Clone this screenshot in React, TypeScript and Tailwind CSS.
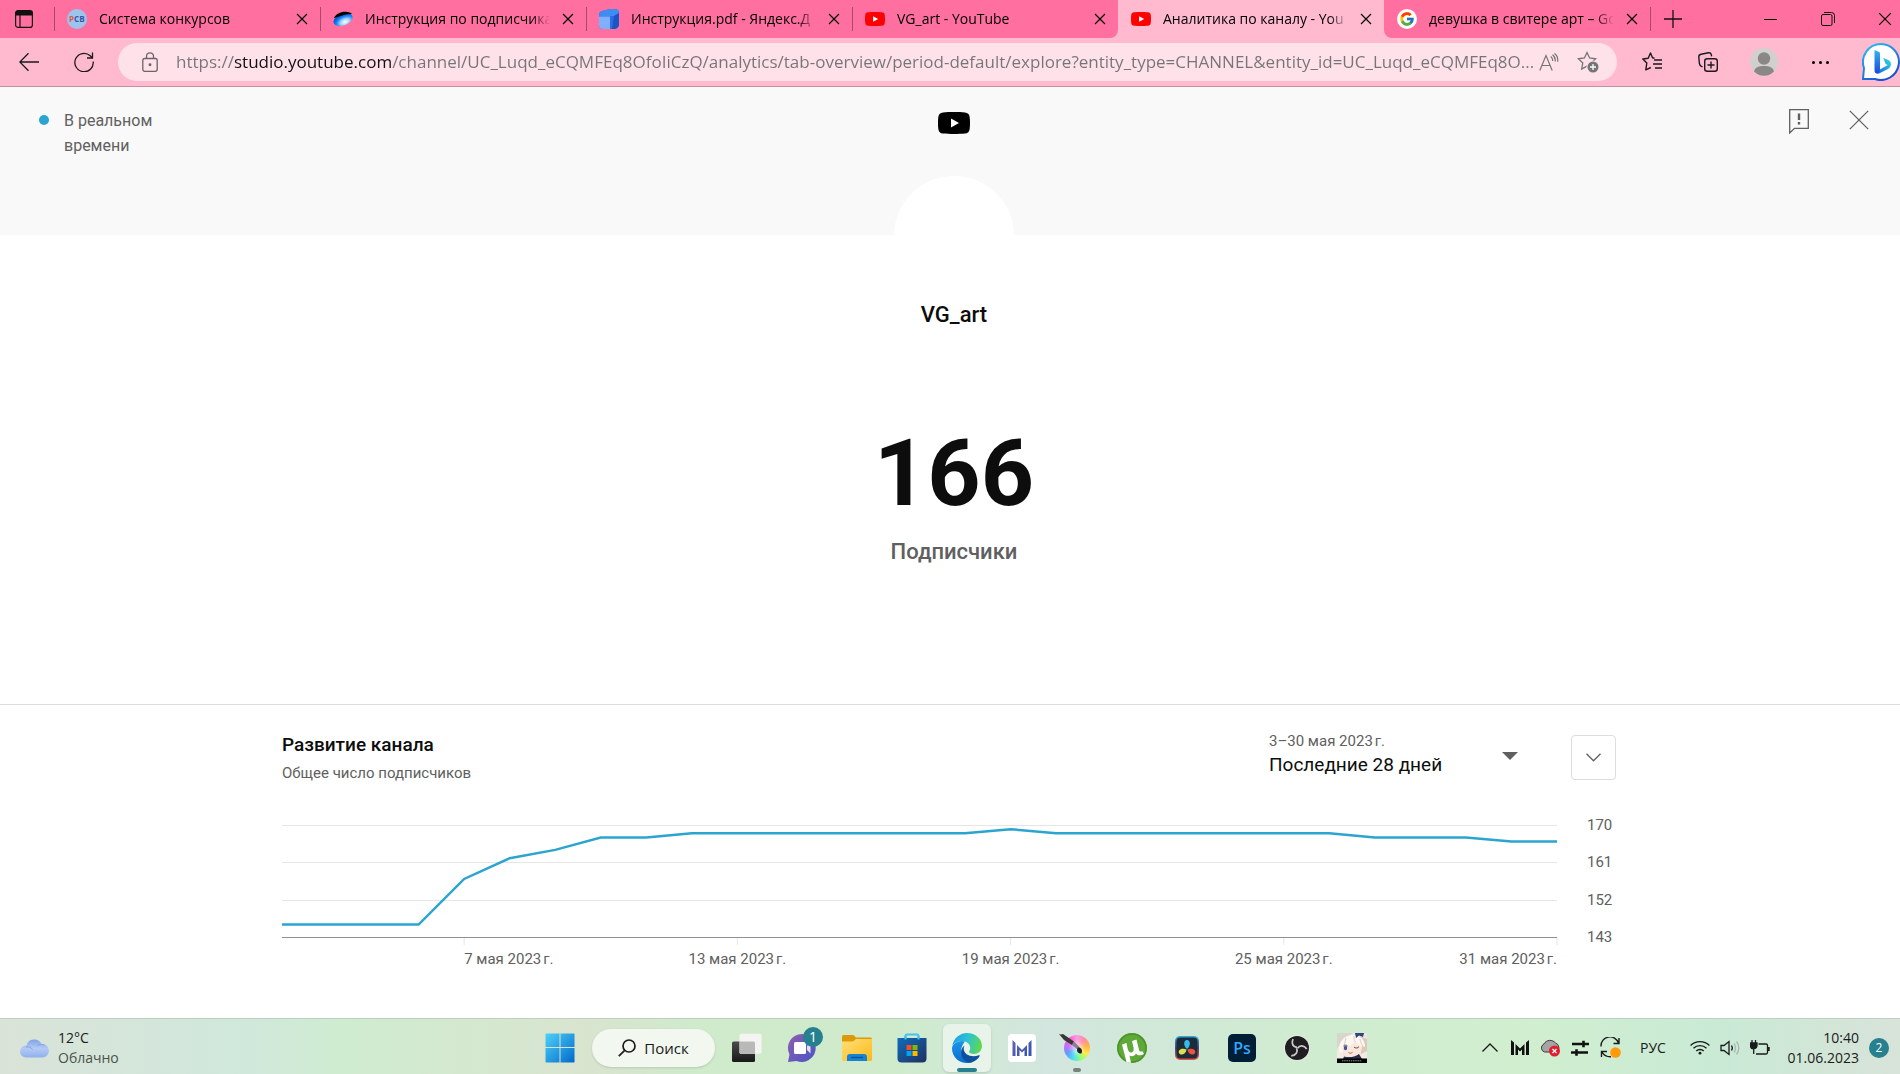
import React from "react";
import { FcGoogle } from "react-icons/fc";

const UI = "font-['Open_Sans','Noto_Sans',sans-serif]";

/* ---------- shared glyphs ---------- */

function Cross({ className, width = 1 }: { className: string; width?: number }) {
  return (
    <svg viewBox="0 0 12 12" className={className} fill="none" stroke="currentColor" strokeWidth={width} aria-hidden="true">
      <path d="M1 1 11 11M11 1 1 11" />
    </svg>
  );
}

function YouTubeMark({ className, fill }: { className: string; fill: string }) {
  return (
    <svg viewBox="0 0 32 22" className={className} preserveAspectRatio="none" aria-hidden="true">
      <path
        fill={fill}
        d="M5 .4C8 .1 12 0 16 0s8 .1 11 .4c2.700.2 4.300 1.600 4.600 4.300.3 2 .4 4 .4 6.300s-.1 4.300-.4 6.300c-.3 2.700-1.900 4.100-4.600 4.300-3 .3-7 .4-11 .4s-8-.1-11-.4C2.300 21.400.7 20 .4 17.300 0 15.300 0 13.300 0 11s0-4.300.4-6.300C.7 2 2.300.6 5 .4Z"
      />
      <path fill="#fff" d="M13 6.500v9l8-4.500z" />
    </svg>
  );
}

/* ---------- tab strip ---------- */

function FavPcb() {
  return (
    <svg viewBox="0 0 20 20" className="size-5" aria-hidden="true">
      <circle cx="10" cy="10" r="10" fill="#9cc4ec" />
      <text x="2" y="13" fontSize="8" fontWeight="700" fontFamily="Open Sans, sans-serif" fill="#e0584a">
        P<tspan fill="#3a55a5">CB</tspan>
      </text>
    </svg>
  );
}

function FavDisk() {
  return (
    <svg viewBox="0 0 20 20" className="size-5" aria-hidden="true">
      <defs>
        <radialGradient id="disk" cx=".55" cy=".75" r=".6">
          <stop offset="0" stopColor="#fff" />
          <stop offset=".4" stopColor="#9fd3ff" />
          <stop offset=".75" stopColor="#1b84f5" />
          <stop offset="1" stopColor="#0a5fd8" />
        </radialGradient>
      </defs>
      <ellipse cx="10" cy="10.500" rx="10" ry="6" fill="url(#disk)" transform="rotate(-22 10 10.500)" />
      <path d="M1 9C3 4.500 9 2 14.500 3c2 .3 3.500.9 4.500 2-3-.2-6 .3-9 1.300C6.500 7.300 4 8.500 1 9Z" fill="#000" />
    </svg>
  );
}

function FavCube() {
  return (
    <svg viewBox="0 0 20 20" className="size-5" aria-hidden="true">
      <path d="M0 6a4 4 0 0 1 3-4l8-2h5a4 4 0 0 1 4 4v11a5 5 0 0 1-4 5H4a4 4 0 0 1-4-4z" fill="#2a6fe6" />
      <path d="M3 2 11 0h5a4 4 0 0 1 4 4l-5 3L0 7a5 5 0 0 1 3-5z" fill="#3f8cf2" />
      <path d="M0 7.500h11V20H4a4 4 0 0 1-4-4z" fill="#7fb0ff" />
      <path d="M15 7 20 4v11a5 5 0 0 1-4 5h-3z" fill="#1a55c8" />
    </svg>
  );
}

function FavGoogle() {
  return (
    <span className="flex size-5 items-center justify-center rounded-full bg-white">
      <FcGoogle className="size-4" />
    </span>
  );
}

const FavYouTube = () => <YouTubeMark className="h-3.5 w-5" fill="#ff0000" />;

const tabs = [
  { title: "Система конкурсов", Icon: FavPcb },
  { title: "Инструкция по подписчика", Icon: FavDisk },
  { title: "Инструкция.pdf - Яндекс.Д", Icon: FavCube },
  { title: "VG_art - YouTube", Icon: FavYouTube },
  { title: "Аналитика по каналу - You", Icon: FavYouTube, active: true },
  { title: "девушка в свитере арт – Go", Icon: FavGoogle },
];

function TabStrip() {
  return (
    <div className="flex h-[38px] items-stretch bg-[#ffbad0] text-black">
      <button aria-label="Меню вкладок" className="flex w-[54px] shrink-0 items-center bg-[#ff6f9f] pl-[15px]">
        <svg viewBox="0 0 18 18" className="size-[18px]" fill="none" stroke="#111" strokeWidth="1.200" aria-hidden="true">
          <rect x=".6" y=".6" width="16.800" height="16.800" rx="2.500" />
          <path d="M5 4v13" />
          <path d="M1 3a2 2 0 0 1 2-2h12a2 2 0 0 1 2 2v2H1z" fill="#111" />
        </svg>
      </button>
      {tabs.map(({ title, Icon, active }, i) => (
        <div
          key={title}
          className={
            active
              ? "flex w-[266px] min-w-0 items-center bg-[#ffbad0] pl-px"
              : "flex w-[266px] min-w-0 items-center bg-[#ff6f9f]" + (i === 3 ? " rounded-br-lg" : i === 5 ? " rounded-bl-lg" : "")
          }
        >
          {!active && <span className={i === 5 ? "h-6 w-px" : "h-6 w-px bg-[#a24c6a]"} />}
          <a href="#tab" aria-current={active ? "page" : undefined} className="flex min-w-0 flex-1 items-center gap-3 pl-3">
            <span className="flex w-5 shrink-0 justify-center">
              <Icon />
            </span>
            <span className="flex-1 overflow-hidden mask-r-from-90% text-sm leading-5 whitespace-nowrap">{title}</span>
          </a>
          <button aria-label={"Закрыть " + title} className="flex w-9 shrink-0 items-center justify-center">
            <Cross className="size-3" width={1.2} />
          </button>
        </div>
      ))}
      <div className="flex min-w-[250px] flex-1 items-center bg-[#ff6f9f]">
        <span className="h-6 w-px bg-[#a24c6a]" />
        <button aria-label="Новая вкладка" className="flex h-full w-11 items-center justify-center">
          <svg viewBox="0 0 18 18" className="size-[18px]" stroke="#111" strokeWidth="1.300" aria-hidden="true">
            <path d="M9 0v18M0 9h18" />
          </svg>
        </button>
        <span className="flex-1" />
        <button aria-label="Свернуть" className="flex h-full w-[57px] items-center justify-center">
          <span className="h-px w-[13px] bg-black" />
        </button>
        <button aria-label="Свернуть в окно" className="flex h-full w-[57px] items-center justify-center">
          <svg viewBox="0 0 14 14" className="size-3.5" fill="none" stroke="#111" aria-hidden="true">
            <rect x=".5" y="2.500" width="10.500" height="11" rx="1.500" />
            <path d="M3 .5h7.500a3 3 0 0 1 3 3V11" />
          </svg>
        </button>
        <button aria-label="Закрыть окно" className="flex h-full w-11 items-center justify-end pr-2">
          <Cross className="size-3.5" />
        </button>
      </div>
    </div>
  );
}

/* ---------- toolbar ---------- */

const STAR = "M10 1.500 12.600 7l6 .8-4.400 4.200 1.100 6-5.300-2.900L4.700 18l1.100-6L1.400 7.800l6-.8z";

function Toolbar() {
  return (
    <div className="flex h-[49px] items-center border-b border-[#c48fa1] bg-[#ffbad0] text-[#1a1a1a]">
      <button aria-label="Назад" className="flex w-[58px] items-center justify-center">
        <svg viewBox="0 0 20 20" className="size-5" fill="none" stroke="currentColor" strokeWidth="1.300" aria-hidden="true">
          <path d="M20 10H.8M9.500 1.200.8 10l8.700 8.800" />
        </svg>
      </button>
      <button aria-label="Обновить" className="flex w-[52px] items-center justify-center">
        <svg viewBox="0 0 20 20" className="size-5" fill="none" stroke="currentColor" strokeWidth="1.300" aria-hidden="true">
          <path d="M19.200 9.500a9.200 9.200 0 1 1-3-5.800L18.500 6M18.500.5V6H13" />
        </svg>
      </button>
      <div className="ml-2 flex h-[38px] flex-1 items-center rounded-full bg-[#ffe1ea] pr-4 pl-6 text-[#757575]">
        <svg viewBox="0 0 16 20" className="h-5 w-4 shrink-0" fill="none" stroke="#6b6468" strokeWidth="1.300" aria-hidden="true">
          <rect x=".8" y="6.500" width="14.400" height="12.800" rx="2" />
          <path d="M4.500 6.500V4.300a3.500 3.500 0 0 1 7 0v2.200" />
          <circle cx="8" cy="12.800" r=".8" fill="#6b6468" />
        </svg>
        <input
          aria-label="Адресная строка"
          readOnly
          className="ml-[18px] h-7 min-w-0 flex-1 bg-[linear-gradient(90deg,#757575_58px,#111_58px,#111_215px,#757575_215px)] bg-clip-text text-[17px] leading-7 text-ellipsis text-transparent outline-none"
          value="https://studio.youtube.com/channel/UC_Luqd_eCQMFEq8OfoIiCzQ/analytics/tab-overview/period-default/explore?entity_type=CHANNEL&entity_id=UC_Luqd_eCQMFEq8O..."
        />
        <button aria-label="Прочесть вслух" className="flex w-6 shrink-0 justify-center">
          <svg viewBox="0 0 20 18" className="h-[18px] w-5" fill="none" stroke="#757575" strokeWidth="1.200" aria-hidden="true">
            <path d="M.8 17.500 7 2.500l6.200 15M3 12.500h8M11.800 3.500c1.500 1.200 2 2.700 1.800 4.500M13.500 1.800c2.200 1.600 3 4 2.700 6.700M15.500.4c2.700 2 3.600 5 3.200 8.300" />
          </svg>
        </button>
        <button aria-label="Добавить в избранное" className="ml-3.5 flex w-[26px] shrink-0 justify-center">
          <svg viewBox="0 0 22 22" className="size-[22px]" fill="none" stroke="#757575" strokeWidth="1.300" aria-hidden="true">
            <path d={STAR} />
            <circle cx="16" cy="16" r="6.500" fill="#ffe1ea" stroke="none" />
            <circle cx="16" cy="16" r="5.500" fill="#757575" stroke="none" />
            <path d="M16 13v6M13 16h6" stroke="#fff" />
          </svg>
        </button>
      </div>
      <div className="flex shrink-0 items-center pl-[7px]">
        <button aria-label="Избранное" className="flex w-14 justify-center">
          <svg viewBox="0 0 20 20" className="size-5" fill="none" stroke="currentColor" strokeWidth="1.400" strokeLinejoin="round" aria-hidden="true">
            <path d="M12.500 6.200 10.500 5.800 8.500 1 6.200 6.200.8 7l4 4-1 6.800 5-2.300M12 8h8M11 12h9M13 16h7" />
          </svg>
        </button>
        <button aria-label="Коллекции" className="flex w-14 justify-center">
          <svg viewBox="0 0 20 20" className="size-5" fill="none" stroke="currentColor" strokeWidth="1.400" strokeLinejoin="round" aria-hidden="true">
            <rect x="6.700" y="6.700" width="12.600" height="12.600" rx="2.500" />
            <path d="M13 9.500v7M9.500 13h7M4.500 15 3 14.200C2 13.500 1.700 12.500 1.400 11.500L.8 5C.7 3.500 1.500 2.500 3 2.200L10.500.8C12 .6 13 1.300 13.300 2.700l.3 1.700" />
          </svg>
        </button>
        <button aria-label="Профиль" className="flex w-14 justify-center">
          <svg viewBox="0 0 28 28" className="size-7" aria-hidden="true">
            <circle cx="14" cy="14" r="14" fill="#d2d0ce" />
            <circle cx="14" cy="10.500" r="6.200" fill="#8a8886" />
            <path d="M4 23.500C5 19.500 8 18 14 18s9 1.500 10 5.500A14 14 0 0 1 4 23.500Z" fill="#8a8886" />
          </svg>
        </button>
        <button aria-label="Настройки и другое" className="flex w-14 justify-center gap-1">
          <span className="size-[3px] rounded-full bg-black" />
          <span className="size-[3px] rounded-full bg-black" />
          <span className="size-[3px] rounded-full bg-black" />
        </button>
        <button aria-label="Bing" className="ml-3.5">
          <svg viewBox="0 0 38 38" className="size-[38px]" aria-hidden="true">
            <defs>
              <linearGradient id="bing" x1="0" y1="0" x2=".6" y2="1">
                <stop offset="0" stopColor="#2cc3f0" />
                <stop offset="1" stopColor="#1a4fd0" />
              </linearGradient>
              <linearGradient id="bingb" x1="0" y1="0" x2="0" y2="1">
                <stop offset="0" stopColor="#30b4f5" />
                <stop offset="1" stopColor="#1b48d8" />
              </linearGradient>
              <linearGradient id="bings" x1="0" y1="1" x2="1" y2="0">
                <stop offset="0" stopColor="#1b5ee0" />
                <stop offset="1" stopColor="#2fe0e0" />
              </linearGradient>
            </defs>
            <path d="M19 1a18 18 0 1 1-6 35H1l1-11A18 18 0 0 1 19 1Z" fill="#fff" stroke="url(#bing)" strokeWidth="2" />
            <path d="M14.500 28.500c-1 1.200.3 2.500 2.500 2l9-4.500c2.500-1.500 3.500-4 2.700-6.500-.6-1.500-1.600-2.300-3-2.800l-4.500-1.600 2.500 5.900 2 1z" fill="url(#bings)" />
            <path d="M12.500 7 17 9c.6.300 1 .8 1 1.500V26c0 3-1.500 4.500-3 4.500s-2.500-1-2.500-3z" fill="url(#bingb)" />
          </svg>
        </button>
      </div>
    </div>
  );
}

/* ---------- page ---------- */

const subscribers = [
  146, 146, 146, 146, 157, 162, 164, 167, 167, 168, 168, 168, 168, 168, 168, 168, 169, 168, 168, 168, 168, 168, 168, 168, 167, 167,
  167, 166, 166,
];
const TOP = 10;
const BOTTOM = 122;
const WIDTH = 1275;
const yOf = (v: number) => BOTTOM - ((v - 143) * (BOTTOM - TOP)) / 27;
const xOf = (i: number) => (i * WIDTH) / 28;
const line = subscribers.map((v, i) => `${xOf(i)},${yOf(v)}`).join(" ");

function Chart() {
  return (
    <div className="mt-8 flex">
      <div className="min-w-0 flex-1">
        <svg viewBox="0 0 1275 132" preserveAspectRatio="none" className="block h-[132px] w-full overflow-visible" role="img" aria-label="Общее число подписчиков">
          <g fill="#e6e6e6">
            <rect y="10" width="1275" height="1" />
            <rect y="47" width="1275" height="1" />
            <rect y="85" width="1275" height="1" />
            {[4, 10, 16, 22, 28].map((i) => (
              <rect key={i} x={xOf(i) - 0.5} y="122" width="1" height="8" />
            ))}
          </g>
          <rect y="122" width="1275" height="1" fill="#909090" />
          <polyline points={line} fill="none" stroke="#2ba5cf" strokeWidth="2.500" vectorEffect="non-scaling-stroke" />
        </svg>
        <div className="grid grid-cols-[repeat(28,minmax(0,1fr))] pt-0.5 text-center text-[15px] leading-5 whitespace-nowrap text-[#606060]">
          <span className="col-[5/8] text-left">7 мая 2023{"\u202f"}г.</span>
          <span className="col-[8/14]">13 мая 2023{"\u202f"}г.</span>
          <span className="col-[14/20]">19 мая 2023{"\u202f"}г.</span>
          <span className="col-[20/26]">25 мая 2023{"\u202f"}г.</span>
          <span className="col-[26/29] text-right">31 мая 2023{"\u202f"}г.</span>
        </div>
      </div>
      <div className="flex h-[132px] w-[59px] flex-col justify-between pl-[30px] text-[15px] leading-5 text-[#606060]">
        <span>170</span>
        <span>161</span>
        <span>152</span>
        <span>143</span>
      </div>
    </div>
  );
}

function Page() {
  return (
    <main className="flex flex-1 flex-col bg-white font-[Roboto,sans-serif] text-[#0d0d0d]">
      <header className="grid h-[148px] grid-cols-[1fr_auto_1fr] items-start overflow-hidden bg-[#f9f9f9]">
        <div className="flex gap-[15px] pt-[21px] pl-[39px]">
          <span className="mt-[7px] size-2.5 shrink-0 rounded-full bg-[#2ba5cf]" />
          <p className="w-[110px] text-base leading-[25px] text-[#606060]">В реальном времени</p>
        </div>
        <div className="flex flex-col items-center gap-[42px] pt-[25px] pl-2">
          <YouTubeMark className="h-[22px] w-8" fill="#000" />
          <span className="size-[120px] rounded-full bg-white" />
        </div>
        <div className="flex items-start justify-end gap-[39px] pt-[22px] pr-[30px] text-[#606060]">
          <button aria-label="Отправить отзыв">
            <svg viewBox="0 0 20 25" className="h-[25px] w-5" fill="none" stroke="currentColor" strokeWidth="1.300" aria-hidden="true">
              <path d="M.7.700h18.600v18.600H5.500L.7 24z" />
              <path d="M10 4.500v6.500M10 13v2.500" strokeWidth="2.400" />
            </svg>
          </button>
          <button aria-label="Закрыть">
            <Cross className="size-[22px]" width={0.7} />
          </button>
        </div>
      </header>

      <section className="flex flex-col items-center border-b border-[#ddd] pb-[136px] pl-2">
        <h1 className="mt-16 text-[22px] leading-8 font-medium">VG_art</h1>
        <p className="mt-[95px] text-[93px] leading-[96px] font-bold">166</p>
        <p className="mt-[14px] text-[22px] leading-8 font-medium text-[#606060]">Подписчики</p>
      </section>

      <section className="mr-[284px] ml-[282px] pt-6">
        <div className="flex items-start">
          <div className="flex-1 pt-1">
            <h2 className="text-[19px] leading-6 font-medium">Развитие канала</h2>
            <p className="mt-1.5 text-[15px] leading-5 text-[#606060]">Общее число подписчиков</p>
          </div>
          <div className="relative mr-[45px] w-[257px]">
            <label htmlFor="period" className="block text-[15px] leading-6 text-[#606060]">
              3–30 мая 2023{"\u202f"}г.
            </label>
            <select id="period" className="block w-full appearance-none bg-transparent text-[19px] leading-6 outline-none">
              <option>Последние 28 дней</option>
            </select>
            <svg viewBox="0 0 16 8" className="pointer-events-none absolute top-[23px] right-2 h-2 w-4" aria-hidden="true">
              <path d="M0 0h16L8 8z" fill="#606060" />
            </svg>
          </div>
          <button aria-label="Скрыть график" className="mt-1.5 flex size-[45px] items-center justify-center rounded border border-[#ddd]">
            <svg viewBox="0 0 15 9" className="h-[9px] w-[15px]" fill="none" stroke="#606060" strokeWidth="1.300" aria-hidden="true">
              <path d="M.5.8 7.500 7.800l7-7" />
            </svg>
          </button>
        </div>
        <Chart />
      </section>
    </main>
  );
}

/* ---------- taskbar ---------- */

function StartIcon() {
  return (
    <svg viewBox="0 0 30 30" className="size-[30px]" aria-hidden="true">
      <defs>
        <linearGradient id="win" gradientUnits="userSpaceOnUse" x1="0" y1="0" x2="30" y2="30">
          <stop offset="0" stopColor="#4fd3fb" />
          <stop offset="1" stopColor="#0068c9" />
        </linearGradient>
      </defs>
      <path d="M1 .5h13.500V14H.5V1zM15.500.5H29l.5.5v13h-14zM.5 15h14v14.500H1L.5 29zM15.500 15h14v14l-.5.5H15.500z" fill="url(#win)" />
    </svg>
  );
}

function TaskViewIcon() {
  return (
    <svg viewBox="0 0 30 30" className="size-[30px]" aria-hidden="true">
      <defs>
        <linearGradient id="tvd" x1="0" y1="0" x2="0" y2="1">
          <stop offset="0" stopColor="#4a4a4a" />
          <stop offset="1" stopColor="#191919" />
        </linearGradient>
      </defs>
      <rect x="0" y="8.500" width="23" height="20.500" rx="1.500" fill="url(#tvd)" />
      <rect x="7.500" y=".8" width="22" height="20" rx="1.500" fill="#f4f5f2" />
      <path d="M7.500 8.500h14A1.500 1.500 0 0 1 23 10v10.800H9a1.500 1.500 0 0 1-1.500-1.500z" fill="#b9bab8" />
    </svg>
  );
}

function ChatIcon() {
  return (
    <span className="relative">
      <svg viewBox="0 0 30 30" className="size-[30px]" aria-hidden="true">
        <defs>
          <linearGradient id="chat" x1="0" y1="0" x2="1" y2="1">
            <stop offset="0" stopColor="#8f5db0" />
            <stop offset="1" stopColor="#4a55c5" />
          </linearGradient>
        </defs>
        <path d="M15 1a14 14 0 1 1-5.500 27L1 29l1.500-7.500A14 14 0 0 1 15 1Z" fill="url(#chat)" />
        <rect x="7" y="9" width="12" height="12" rx="1.500" fill="#fff" />
        <path d="m20 13 3.500-3.500v11L20 17z" fill="#dfe2fa" />
      </svg>
      <span className="absolute -top-1.5 -right-1.5 flex size-5 items-center justify-center rounded-full bg-[#26808f] text-sm leading-5 text-white">1</span>
    </span>
  );
}

function FolderIcon() {
  return (
    <svg viewBox="0 0 30 28" className="h-7 w-[30px]" aria-hidden="true">
      <defs>
        <linearGradient id="fold" x1="0" y1="0" x2="1" y2="1">
          <stop offset="0" stopColor="#ffe07a" />
          <stop offset="1" stopColor="#fbb917" />
        </linearGradient>
      </defs>
      <path d="M0 2.500A1.500 1.500 0 0 1 1.500 1h9c1 0 1.500.4 2 1l1.500 1.500h14.500A1.500 1.500 0 0 1 30 5v6H0z" fill="#dd9a08" />
      <path d="M0 7.500h11L14 5h16v20.500a1.500 1.500 0 0 1-1.500 1.500h-27A1.500 1.500 0 0 1 0 25.500z" fill="url(#fold)" />
      <path d="M5 27v-4a3 3 0 0 1 3-3h14a3 3 0 0 1 3 3v4z" fill="#1583d3" />
      <path d="M9 23.500h12" stroke="#0b4f93" strokeWidth="1.300" />
    </svg>
  );
}

function StoreIcon() {
  return (
    <svg viewBox="0 0 30 30" className="size-[30px]" aria-hidden="true">
      <defs>
        <linearGradient id="store" x1="0" y1="0" x2="1" y2="1">
          <stop offset="0" stopColor="#0f6cbd" />
          <stop offset="1" stopColor="#20305f" />
        </linearGradient>
      </defs>
      <path d="M8.500 8V3a1.500 1.500 0 0 1 1.500-1.500h10A1.500 1.500 0 0 1 21.500 3v5" fill="none" stroke="#41c4ee" strokeWidth="2" />
      <path d="M.5 5h29v20.500a4 4 0 0 1-4 4h-21a4 4 0 0 1-4-4z" fill="url(#store)" />
      <path d="M8.500 6.500V3M21.500 6.500V3" stroke="#41c4ee" strokeWidth="2" />
      <rect x="9.500" y="12" width="5" height="5" fill="#f25022" />
      <rect x="15.500" y="12" width="5" height="5" fill="#7fba00" />
      <rect x="9.500" y="18" width="5" height="5" fill="#00a4ef" />
      <rect x="15.500" y="18" width="5" height="5" fill="#ffb900" />
    </svg>
  );
}

function EdgeIcon() {
  return (
    <svg viewBox="0 0 30 30" className="size-[30px]" aria-hidden="true">
      <defs>
        <linearGradient id="edgeTop" x1="0" y1=".3" x2="1" y2=".5">
          <stop offset="0" stopColor="#1c9fe8" />
          <stop offset=".5" stopColor="#2bc3d2" />
          <stop offset="1" stopColor="#62d84a" />
        </linearGradient>
        <linearGradient id="edgeLeft" x1="0" y1="0" x2="0" y2="1">
          <stop offset="0" stopColor="#1c96e8" />
          <stop offset="1" stopColor="#0a6ed1" />
        </linearGradient>
      </defs>
      <path d="M.3 13C1.500 5.500 7.500 0 15 0c8.500 0 15 6 15 13 0 5-4 8-8 8-3 0-5-1-5-2.200 0-.8 1.300-1.500 1.300-4C18.300 11 14.500 8 10 8 5.500 8 1.500 10.500.3 13Z" fill="url(#edgeTop)" />
      <path d="M10 8C4 8 0 12 0 15.500 0 24 7 30 15 30c2 0 4-.4 5.500-1-6 .5-11.500-4.500-11.500-11 0-4 2-7 4-9.500C12.200 8.200 11 8 10 8Z" fill="url(#edgeLeft)" />
      <path d="M12.500 12.500C10 14.500 9 17 9 19.500 9 25.500 14 30 19 29.500c4-1 7-3.500 8.700-6.500.3-.7-.3-1-1-.7-1.500.7-3.200 1-5 1-5.500 0-10-3-10-7.500 0-1.200.3-2.300.8-3.300Z" fill="#0c509e" />
    </svg>
  );
}

function MIcon() {
  return (
    <svg viewBox="0 0 28 28" className="size-7" aria-hidden="true">
      <defs>
        <linearGradient id="mgr" x1="0" y1="0" x2="1" y2="1">
          <stop offset="0" stopColor="#6a5fb5" />
          <stop offset="1" stopColor="#2f55b0" />
        </linearGradient>
      </defs>
      <rect width="28" height="28" rx="4" fill="#fff" />
      <path d="M4.500 6 7.500 9v13h-3zM23.500 6l-3 3v13h3zM9 11l5 5 5-5v11h-2.500v-6L14 18.500 11.500 16v6H9z" fill="url(#mgr)" />
    </svg>
  );
}

function KritaIcon() {
  return (
    <span className="relative flex size-[26px] items-center justify-center rounded-full bg-[conic-gradient(from_0deg,#ff9be8,#ff8fa0,#ffb347,#ffe94a,#8dff7a,#4fe0f0,#5aa0ff,#c86bff,#ff5ad0,#ff9be8)]">
      <span className="size-3 rounded-full bg-white/60 blur-[2px]" />
      <svg viewBox="0 0 30 30" className="absolute -top-1 -left-1 size-[30px] overflow-visible" aria-hidden="true">
        <path d="M-1 3 1 3.500 3 3l11 7.500-2 3.500L4 9z" fill="#383838" />
        <path d="m14 10.500 5.500 5.500-2 2.500-5.500-4.500z" fill="#7d858e" />
        <path d="M18 16.500c3-.3 5 2.500 3.500 6-3 .3-5-1.500-4.300-4.500z" fill="#202020" />
      </svg>
    </span>
  );
}

function TorrentIcon() {
  return (
    <svg viewBox="0 0 30 30" className="size-[30px]" aria-hidden="true">
      <circle cx="15" cy="15" r="15" fill="#5fa83a" />
      <circle cx="15" cy="15" r="14" fill="none" stroke="#4c9428" strokeWidth="1.500" />
      <path d="M5 11.500 9.500 10c1 5 1.500 9.500 4.500 9.500 2.500 0 3-2.500 2.500-5L15 8l4.500-1.500L22 17c.5 1.500 1.500 2 3.500 1.200L27 21c-3 2-6.500 1.800-8-.5-1 2.300-4 3.500-6.500 2L14 30l-4.500-1z" fill="#fff" />
    </svg>
  );
}

function ResolveIcon() {
  return (
    <svg viewBox="0 0 24 24" className="size-6" aria-hidden="true">
      <defs>
        <linearGradient id="dv" x1="0" y1="0" x2="0" y2="1">
          <stop offset="0" stopColor="#2fb0d8" />
          <stop offset=".5" stopColor="#4a4a70" />
          <stop offset="1" stopColor="#e5543c" />
        </linearGradient>
      </defs>
      <rect width="24" height="24" rx="5" fill="url(#dv)" />
      <rect x="1.500" y="1.500" width="21" height="21" rx="4" fill="#1e2b3c" />
      <path d="M12 13c-4-3-3.500-9 0-9s4 6 0 9Z" fill="#33bde8" />
      <path d="M11.500 13.500c-.5 5-6 6.500-7.500 3.500s3-5.500 7.500-3.500Z" fill="#d9e24c" />
      <path d="M12.500 13.500c.5 5 6 6.500 7.500 3.500s-3-5.500-7.500-3.500Z" fill="#f0533c" />
    </svg>
  );
}

function PsIcon() {
  return <span className="flex size-7 items-center justify-center rounded-[5px] bg-[#001e36] text-base leading-none font-semibold text-[#31a8ff]">Ps</span>;
}

function ObsIcon() {
  return (
    <svg viewBox="0 0 26 26" className="size-[26px]" aria-hidden="true">
      <circle cx="13" cy="13" r="13" fill="#e8e8e8" />
      <circle cx="13" cy="13" r="12" fill="#1f1d20" />
      <g fill="none" stroke="#c8c8c8" strokeWidth="1.800">
        <path d="M13 12.500C9 12 7 8.500 9 4" />
        <path d="M13 12.500C9 12 7 8.500 9 4" transform="rotate(120 13 13)" />
        <path d="M13 12.500C9 12 7 8.500 9 4" transform="rotate(240 13 13)" />
      </g>
    </svg>
  );
}

function GameIcon() {
  return (
    <svg viewBox="0 0 30 30" className="size-[30px]" aria-hidden="true">
      <rect width="30" height="30" fill="#efe7df" />
      <path d="M0 0h16L4 9 0 16z" fill="#d8d5cc" />
      <path d="M22 3l8 3v18l-6-2z" fill="#dcc9bb" />
      <path d="M5 13c0-5 5-8 10-8s10 4 10 9-4 10-10 10S5 19 5 13Z" fill="#fde6da" />
      <path d="M2 20C1 9 7 2 16 2c8 0 12 5 12 12l-3-1c-2 0-5-2-6.500-5-2 3-5 5-8 5-1 0-3-.5-3.500-1.500C5.500 14 5 17 6 21z" fill="#fbf7f0" />
      <path d="M9 5c-1 3-1 5-2 7M17 3c0 3 0 4 1.500 6M23 6c.500 2 1 5 3 7" stroke="#d3c3b5" strokeWidth=".8" fill="none" />
      <path d="M18 0h9l-1 4-4-1.500L19 5z" fill="#2e4480" />
      <ellipse cx="8.500" cy="15" rx="1.700" ry="2.300" fill="#3a55a3" />
      <path d="M6.500 13c1-1.200 3-1.200 4 0" stroke="#4a3b48" fill="none" strokeWidth=".9" />
      <path d="M17 14c1.500 1.500 3.500 1.300 5-.3" stroke="#5b4348" fill="none" />
      <path d="M11.500 19.500c1.200 1 2.800 1 4-.2" stroke="#b05a55" fill="none" />
      <path d="M0 17l6 4 1 5H0zM24 21l6-3v8h-7z" fill="#f3ece3" />
      <path d="M7 23.500c4 1 10 1 15-2.500l3 5H6z" fill="#2b2d4a" />
      <rect y="25.500" width="30" height="4.500" fill="#000" />
      <path d="M5 27.800h20" stroke="#999" strokeWidth="1" strokeDasharray="1.500 .7" />
    </svg>
  );
}

const apps = [
  { name: "Представление задач", Icon: TaskViewIcon },
  { name: "Чат", Icon: ChatIcon },
  { name: "Проводник", Icon: FolderIcon },
  { name: "Microsoft Store", Icon: StoreIcon },
  { name: "Microsoft Edge", Icon: EdgeIcon, state: "active" },
  { name: "M", Icon: MIcon },
  { name: "Krita", Icon: KritaIcon, state: "open" },
  { name: "uTorrent", Icon: TorrentIcon },
  { name: "DaVinci Resolve", Icon: ResolveIcon },
  { name: "Photoshop", Icon: PsIcon },
  { name: "OBS Studio", Icon: ObsIcon },
  { name: "Игра", Icon: GameIcon },
];

function TrayButton({ label, children }: { label: string; children: React.ReactNode }) {
  return (
    <button aria-label={label} className="flex w-[30px] shrink-0 justify-center">
      {children}
    </button>
  );
}

function Taskbar() {
  return (
    <footer className="grid h-14 grid-cols-[1fr_auto_1fr] items-center border-t border-[#bcd0bf] bg-[linear-gradient(90deg,#dae3d8_0%,#d0e8dc_13%,#cfecd0_18%,#d9e4cf_31%,#cfebcc_37%,#cfebcc_47%,#d3e6df_55%,#cfebd0_68%,#d1efcf_80%,#c9ead5_90%,#d8e3d9_100%)] pt-0.5 text-[#1b1b1b]">
      <button className="flex items-center gap-2 pl-5 text-left text-sm leading-5">
        <svg viewBox="0 0 30 20" className="h-5 w-[30px]" aria-hidden="true">
          <defs>
            <linearGradient id="cloud" x1="0" y1="0" x2="0" y2="1">
              <stop offset="0" stopColor="#7fa3e6" />
              <stop offset=".5" stopColor="#b4caf5" />
              <stop offset="1" stopColor="#8fb0ee" />
            </linearGradient>
          </defs>
          <path d="M6 19.500a6 6 0 0 1 0-12h.5a8 8 0 0 1 15-1.500H23a6.800 6.800 0 0 1 0 13.500z" fill="url(#cloud)" />
          <path d="M6 9c3-.5 5 .5 6.500 2.500M17 8c2-2 5-2 7.500-1" stroke="#83a4e2" fill="none" />
        </svg>
        <span>
          12°C
          <br />
          <span className="text-[#4b534c]">Облачно</span>
        </span>
      </button>

      <nav aria-label="Панель задач" className="flex items-center gap-[7px] pl-3">
        <button aria-label="Пуск" className="flex size-12 items-center justify-center">
          <StartIcon />
        </button>
        <button className="mx-px flex h-[38px] w-[123px] items-center justify-center gap-2 rounded-full bg-[#f2f8f0] text-[15px] leading-5 shadow-sm">
          <svg viewBox="0 0 18 18" className="size-[18px]" fill="none" stroke="#1b1b1b" strokeWidth="1.700" aria-hidden="true">
            <circle cx="11" cy="7" r="6" />
            <path d="M6.700 11.300.8 17.200" />
          </svg>
          Поиск
        </button>
        {apps.map(({ name, Icon, state }) => (
          <button
            key={name}
            aria-label={name}
            className={
              state === "active"
                ? "relative flex size-12 items-center justify-center rounded-md bg-[#e8f4ea] shadow-sm"
                : "relative flex size-12 items-center justify-center"
            }
          >
            <Icon />
            {state === "active" && <span className="absolute bottom-0 h-1 w-5 rounded-full bg-[#26808f]" />}
            {state === "open" && <span className="absolute bottom-0 h-1 w-2 rounded-full bg-[#76827b]" />}
          </button>
        ))}
      </nav>

      <div className="flex items-center justify-end pr-[11px]">
        <TrayButton label="Показать скрытые значки">
          <svg viewBox="0 0 16 9" className="h-[9px] w-4" fill="none" stroke="#1b1b1b" strokeWidth="1.300" aria-hidden="true">
            <path d="m.5 8.500 7.500-7.500 7.500 7.500" />
          </svg>
        </TrayButton>
        <TrayButton label="M">
          <svg viewBox="0 0 18 15" className="h-[15px] w-[18px]" aria-hidden="true">
            <path d="M0 0 3 2.500V15H0zM18 0l-3 2.500V15h3zM4.500 4 9 8.500 13.500 4v11H11V9.500l-2 2-2-2V15H4.500z" fill="#111" />
          </svg>
        </TrayButton>
        <TrayButton label="OneDrive">
          <svg viewBox="0 0 20 18" className="h-[18px] w-5" aria-hidden="true">
            <path d="M4.500 13a4.300 4.300 0 0 1-.6-8A7 7 0 0 1 15.500 4a5 5 0 0 1 1 9z" fill="#a5a5a5" stroke="#3a3a3a" />
            <circle cx="14.500" cy="12" r="5.500" fill="#e02030" />
            <path d="m12.500 10 4 4m0-4-4 4" stroke="#fff" strokeWidth="1.300" />
          </svg>
        </TrayButton>
        <TrayButton label="Микшер">
          <svg viewBox="0 0 18 16" className="h-4 w-[18px]" stroke="#111" strokeWidth="2.600" aria-hidden="true">
            <path d="M1 4h17M0 12.500h17M12.500.8v6.400M5.500 9.200v6.600" />
          </svg>
        </TrayButton>
        <TrayButton label="Обновления">
          <svg viewBox="0 0 21 21" className="size-[21px]" fill="none" stroke="#1b1b1b" strokeWidth="1.400" aria-hidden="true">
            <path d="M1 9.500A9 9 0 0 1 18.500 6M19 1v5.500h-5.500M1.500 20v-5.500H7M2 15c2 3.500 5 5 9 4.800" />
            <circle cx="15.500" cy="15.500" r="5.300" fill="#ff9a0a" stroke="none" />
          </svg>
        </TrayButton>
        <button className="w-[60px] pr-1 text-center text-sm leading-5">РУС</button>
        <TrayButton label="Wi-Fi">
          <svg viewBox="0 0 20 15" className="h-[15px] w-5" fill="none" stroke="#1b1b1b" strokeWidth="1.400" aria-hidden="true">
            <path d="M.6 5.500a13.300 13.300 0 0 1 18.800 0M3.500 8.300a9.200 9.200 0 0 1 13 0M6.300 11a5.200 5.200 0 0 1 7.400 0" />
            <circle cx="10" cy="13.200" r="1.400" fill="#1b1b1b" stroke="none" />
          </svg>
        </TrayButton>
        <TrayButton label="Громкость">
          <svg viewBox="0 0 20 16" className="h-4 w-5" fill="none" stroke="#1b1b1b" strokeWidth="1.300" aria-hidden="true">
            <path d="M1 5.500v5h3l5 4v-13l-5 4zM11.500 5.500c1 1.500 1 3.500 0 5" />
            <path d="M14 3.500c2 2.500 2 6.500 0 9M16.500 1.500c3 3.500 3 9.500 0 13" stroke="#a7bbae" />
          </svg>
        </TrayButton>
        <TrayButton label="Батарея">
          <svg viewBox="0 0 20 16" className="h-4 w-5" fill="none" stroke="#1b1b1b" strokeWidth="1.300" aria-hidden="true">
            <path d="M8.500 4H16a1.500 1.500 0 0 1 1.500 1.500v7A1.500 1.500 0 0 1 16 14H6" />
            <path d="M18.800 7v4" strokeWidth="1.800" />
            <path d="M.5 3h6.500v2.500a3.200 3.200 0 0 1-6.500 0zM2 0v3M5.500 0v3M3.700 8v6" fill="#1b1b1b" />
          </svg>
        </TrayButton>
        <button className="w-[84px] text-right text-sm leading-5">
          10:40
          <br />
          01.06.2023
        </button>
        <span className="ml-2.5 flex size-5 items-center justify-center rounded-full bg-[#26808f] text-xs leading-5 text-white">2</span>
      </div>
    </footer>
  );
}

export default function App() {
  return (
    <div className={"flex min-h-screen flex-col overflow-hidden " + UI}>
      <TabStrip />
      <Toolbar />
      <Page />
      <Taskbar />
    </div>
  );
}
